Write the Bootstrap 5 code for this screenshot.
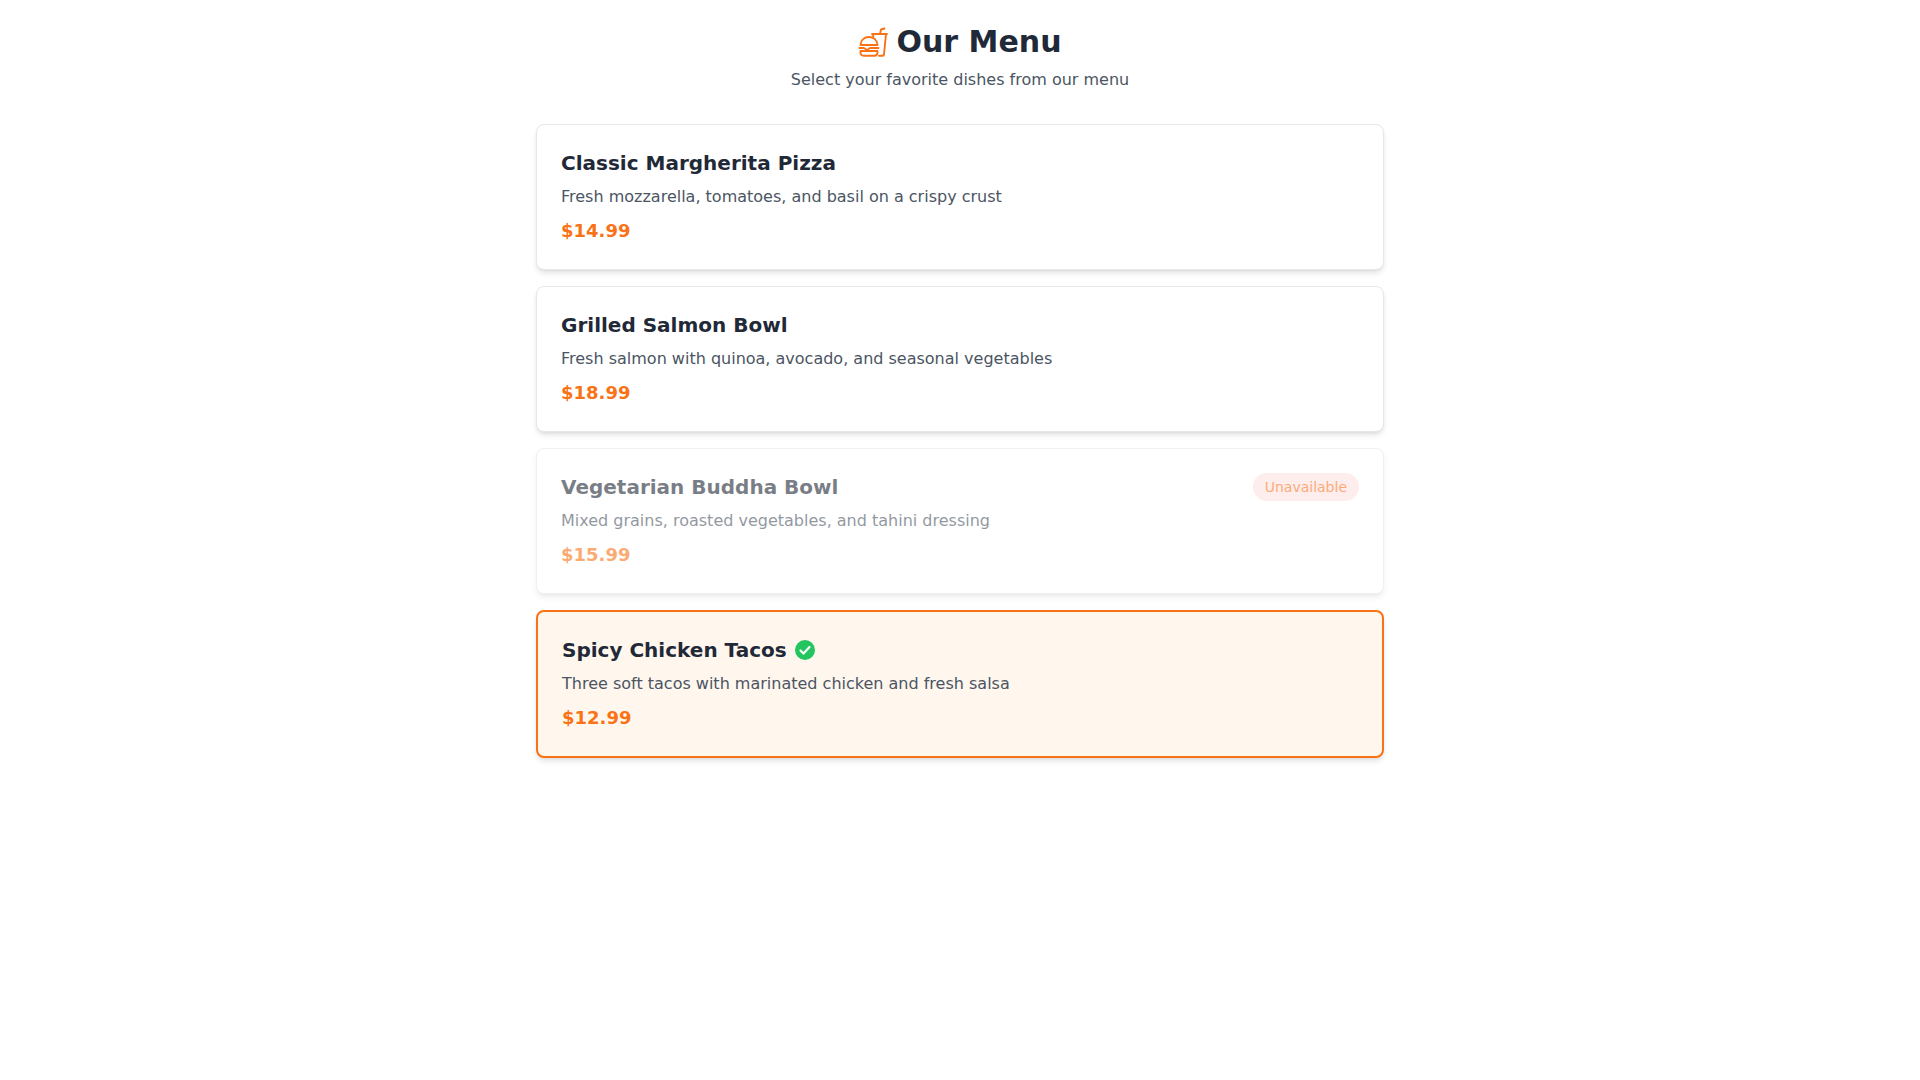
<!DOCTYPE html>
<html lang="en">
<head>
    <meta charset="UTF-8">
    <meta name="viewport" content="width=device-width, initial-scale=1.0">
    <title>Our Menu</title>
    <link href="https://cdn.jsdelivr.net/npm/bootstrap@5.3.0/dist/css/bootstrap.min.css" rel="stylesheet">
    <style>
        body {
            background-color: #fff;
            color: #1f2937;
            font-family: "DejaVu Sans", sans-serif;
        }
        .menu-wrap {
            max-width: 896px;
            padding: 24px;
        }
        .menu-title {
            font-size: 30px;
            line-height: 36px;
            font-weight: 700;
            color: #1f2937;
        }
        .menu-sub {
            font-size: 16px;
            line-height: 24px;
            color: #4b5563;
            margin-top: 8px;
            margin-bottom: 32px;
        }
        .dish {
            border: 1px solid #e5e7eb;
            border-radius: 8px;
            box-shadow: 0 4px 6px -1px rgba(0, 0, 0, .1), 0 2px 4px -2px rgba(0, 0, 0, .1);
            padding: 24px;
        }
        .dish-off {
            opacity: .6;
        }
        .dish-picked {
            border: 2px solid #f97316;
            background-color: #fff7ed;
        }
        .dish-name {
            font-size: 20px;
            line-height: 28px;
            font-weight: 600;
            color: #1f2937;
            margin: 0;
        }
        .dish-text {
            font-size: 16px;
            line-height: 24px;
            color: #4b5563;
            margin: 8px 0;
        }
        .dish-price {
            font-size: 18px;
            line-height: 28px;
            font-weight: 700;
            color: #f97316;
        }
        .tag-off {
            background-color: #fee2e2;
            color: #f97316;
            font-size: 14px;
            line-height: 20px;
            font-weight: 400;
            padding: 4px 12px;
        }
    </style>
</head>
<body>
    <div class="menu-wrap mx-auto">
        <div class="text-center">
            <div class="d-flex justify-content-center align-items-center gap-2">
                <svg width="30" height="30" viewBox="0 0 30 30" fill="none" stroke="#f97316" stroke-width="1.9" stroke-linejoin="round" stroke-linecap="round">
                    <!-- cup behind the burger -->
                    <path d="M14 7h15"/>
                    <path d="M22 7l1-4.500 3.500-1"/>
                    <path d="M15 7l.4 2.500M28 7l-2 20.500c-.1.700-.5 1.200-1.200 1.200H21"/>
                    <!-- burger -->
                    <path d="M2.500 18c0-5 4-8 8.500-8s8.500 3 8.500 8z"/>
                    <path d="M1.500 21h4.500l3 2 3-2h8.500"/>
                    <path d="M2.500 24h17v1.500c0 2-1.300 3.200-3.200 3.200H5.700c-1.900 0-3.200-1.200-3.200-3.200z"/>
                </svg>
                <h1 class="menu-title m-0">Our Menu</h1>
            </div>
            <p class="menu-sub">Select your favorite dishes from our menu</p>
        </div>

        <div class="d-flex flex-column gap-3">
            <div class="card dish">
                <h3 class="dish-name">Classic Margherita Pizza</h3>
                <p class="dish-text">Fresh mozzarella, tomatoes, and basil on a crispy crust</p>
                <div class="dish-price">$14.99</div>
            </div>
            <div class="card dish">
                <h3 class="dish-name">Grilled Salmon Bowl</h3>
                <p class="dish-text">Fresh salmon with quinoa, avocado, and seasonal vegetables</p>
                <div class="dish-price">$18.99</div>
            </div>
            <div class="card dish dish-off">
                <div class="d-flex justify-content-between align-items-center">
                    <h3 class="dish-name">Vegetarian Buddha Bowl</h3>
                    <span class="badge rounded-pill tag-off">Unavailable</span>
                </div>
                <p class="dish-text">Mixed grains, roasted vegetables, and tahini dressing</p>
                <div class="dish-price">$15.99</div>
            </div>
            <div class="card dish dish-picked">
                <div class="d-flex align-items-center gap-2">
                    <h3 class="dish-name">Spicy Chicken Tacos</h3>
                    <svg width="20" height="20" viewBox="0 0 20 20">
                        <circle cx="10" cy="10" r="10" fill="#22c55e"/>
                        <path d="M5.500 10.500l3 3 6-6.500" fill="none" stroke="#fff" stroke-width="2.200" stroke-linecap="round" stroke-linejoin="round"/>
                    </svg>
                </div>
                <p class="dish-text">Three soft tacos with marinated chicken and fresh salsa</p>
                <div class="dish-price">$12.99</div>
            </div>
        </div>
    </div>

    <script src="https://cdn.jsdelivr.net/npm/bootstrap@5.3.0/dist/js/bootstrap.bundle.min.js"></script>
</body>
</html>
